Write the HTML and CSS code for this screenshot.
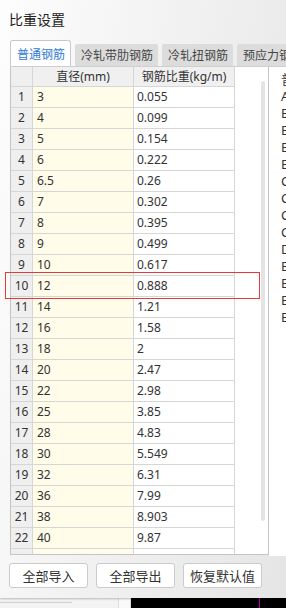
FILE: index.html
```html
<!DOCTYPE html>
<html lang="zh-CN">

<head>
    <meta charset="UTF-8">
    <meta name="viewport" content="width=device-width, initial-scale=1.0">
    <title>比重设置</title>
    <link rel="stylesheet" href="styles.css">
</head>

<body>
    <div class="dialog">
        <div class="title">比重设置</div>

        <div class="tabs">
            <div class="tab active">普通钢筋</div>
            <div class="tab">冷轧带肋钢筋</div>
            <div class="tab">冷轧扭钢筋</div>
            <div class="tab">预应力钢筋</div>
        </div>

        <div class="content">
            <div class="grid-panel">
                <table class="grid">
                    <thead>
                        <tr>
                            <th class="num"></th>
                            <th class="dia">直径(mm)</th>
                            <th class="wt">钢筋比重(kg/m)</th>
                        </tr>
                    </thead>
                    <tbody>
                        <tr><td class="num">1</td><td class="dia">3</td><td class="wt">0.055</td></tr>
                        <tr><td class="num">2</td><td class="dia">4</td><td class="wt">0.099</td></tr>
                        <tr><td class="num">3</td><td class="dia">5</td><td class="wt">0.154</td></tr>
                        <tr><td class="num">4</td><td class="dia">6</td><td class="wt">0.222</td></tr>
                        <tr><td class="num">5</td><td class="dia">6.5</td><td class="wt">0.26</td></tr>
                        <tr><td class="num">6</td><td class="dia">7</td><td class="wt">0.302</td></tr>
                        <tr><td class="num">7</td><td class="dia">8</td><td class="wt">0.395</td></tr>
                        <tr><td class="num">8</td><td class="dia">9</td><td class="wt">0.499</td></tr>
                        <tr><td class="num">9</td><td class="dia">10</td><td class="wt">0.617</td></tr>
                        <tr><td class="num">10</td><td class="dia">12</td><td class="wt">0.888</td></tr>
                        <tr><td class="num">11</td><td class="dia">14</td><td class="wt">1.21</td></tr>
                        <tr><td class="num">12</td><td class="dia">16</td><td class="wt">1.58</td></tr>
                        <tr><td class="num">13</td><td class="dia">18</td><td class="wt">2</td></tr>
                        <tr><td class="num">14</td><td class="dia">20</td><td class="wt">2.47</td></tr>
                        <tr><td class="num">15</td><td class="dia">22</td><td class="wt">2.98</td></tr>
                        <tr><td class="num">16</td><td class="dia">25</td><td class="wt">3.85</td></tr>
                        <tr><td class="num">17</td><td class="dia">28</td><td class="wt">4.83</td></tr>
                        <tr><td class="num">18</td><td class="dia">30</td><td class="wt">5.549</td></tr>
                        <tr><td class="num">19</td><td class="dia">32</td><td class="wt">6.31</td></tr>
                        <tr><td class="num">20</td><td class="dia">36</td><td class="wt">7.99</td></tr>
                        <tr><td class="num">21</td><td class="dia">38</td><td class="wt">8.903</td></tr>
                        <tr><td class="num">22</td><td class="dia">40</td><td class="wt">9.87</td></tr>
                        <tr><td class="num">23</td><td class="dia">50</td><td class="wt">15.42</td></tr>
                    </tbody>
                </table>
                <div class="scrollbar"></div>
            </div>

            <div class="side-panel">
                <p>普通钢筋</p>
                <p>A</p>
                <p>B</p>
                <p>B</p>
                <p>B</p>
                <p>B</p>
                <p>C</p>
                <p>C</p>
                <p>C</p>
                <p>C</p>
                <p>D</p>
                <p>B</p>
                <p>B</p>
                <p>B</p>
                <p>B</p>
            </div>
        </div>

        <div class="buttons">
            <button class="btn">全部导入</button>
            <button class="btn">全部导出</button>
            <button class="btn">恢复默认值</button>
        </div>

        <!-- 标注框 -->
        <div class="mark"></div>
    </div>

    <div class="desktop">
        <div class="desk-left">
            <div class="desk-line"></div>
        </div>
        <div class="desk-sep"></div>
        <div class="desk-dark">
            <div class="desk-pink"></div>
        </div>
    </div>
</body>

</html>
```

FILE: styles.css
```css
* {
    padding: 0;
    margin: 0;
    box-sizing: border-box;
}

body {
    width: 286px;
    height: 608px;
    overflow: hidden;
    font-family: "Noto Sans", "Noto Sans CJK SC", sans-serif;
    color: #333;
    background-color: #f2f2f2;
}

.dialog {
    position: relative;
    height: 598px;
    background: linear-gradient(100deg, #fdfdfd 0%, #f3f3f3 40%, #e5e5e5 100%);
    box-shadow: 0 1px 2px rgba(0, 0, 0, 0.25);
}

.title {
    height: 40px;
    padding: 9px 0 0 9px;
    font-family: "Noto Sans CJK SC", sans-serif;
    font-size: 14px;
    line-height: 20px;
    color: #222;
}

/* 选项卡 */
.tabs {
    display: flex;
    gap: 4px;
    height: 26px;
    padding-left: 10px;
    align-items: flex-end;
    white-space: nowrap;
    overflow: hidden;
}

.tab {
    height: 22px;
    padding: 0 5px 0 6px;
    font-family: "Noto Sans CJK SC", sans-serif;
    font-size: 12px;
    line-height: 22px;
    color: #444;
    background-color: #dcdcdc;
    border-radius: 2px 2px 0 0;
    flex-shrink: 0;
}

.tab.active {
    height: 26px;
    width: 61px;
    padding-top: 1px;
    line-height: 24px;
    color: #2f7ad6;
    background-color: #fff;
    border: 1px solid #c9c9c9;
    border-bottom: none;
    border-radius: 3px 3px 0 0;
}

.content {
    display: flex;
    height: 489px;
    border-top: 1px solid #cfcfcf;
    margin-left: 10px;
}

.grid-panel {
    position: relative;
    width: 259px;
    height: 488px;
    overflow: hidden;
    background-color: #fff;
    border-left: 1px solid #c4c4c4;
    border-right: 1px solid #c4c4c4;
    border-bottom: 1px solid #c4c4c4;
}

.grid {
    border-collapse: separate;
    border-spacing: 0;
    font-size: 12px;
}

.grid th,
.grid td {
    border-right: 1px solid #d6d6d6;
    border-bottom: 1px solid #d6d6d6;
    font-weight: normal;
    white-space: nowrap;
    padding: 0;
}

.grid th {
    height: 20px;
    line-height: 19px;
    background-color: #f0f0f0;
    font-family: "Noto Sans", "Noto Sans CJK SC", sans-serif;
    color: #333;
}

.grid td {
    height: 21px;
    line-height: 20px;
}

.grid .num {
    width: 22px;
    text-align: center;
    background-color: #efefef;
}

.grid .dia {
    width: 101px;
}

.grid .wt {
    width: 101px;
}

.grid td.dia {
    padding-left: 4px;
    background-color: #fffce9;
}

.grid td.wt {
    padding-left: 3px;
    background-color: #fff;
}

.grid th.dia,
.grid th.wt {
    text-align: center;
}

.scrollbar {
    position: absolute;
    left: 250px;
    top: 14px;
    width: 4px;
    height: 440px;
    border-radius: 2px;
    background-color: #e4e4e4;
}

.side-panel {
    flex: 1;
    height: 489px;
    padding: 4px 0 0 12px;
    overflow: hidden;
    background-color: #fff;
    font-family: "Noto Sans", "Noto Sans CJK SC", sans-serif;
    font-size: 13px;
    line-height: 17px;
    color: #333;
    white-space: nowrap;
}

/* 按钮 */
.buttons {
    display: flex;
    gap: 8px;
    padding: 8px 0 0 9px;
}

.btn {
    width: 79px;
    height: 25px;
    background-color: #fff;
    border: 1px solid #cbcbcb;
    border-radius: 3px;
    font-family: "Noto Sans CJK SC", sans-serif;
    font-size: 13px;
    color: #333;
}

.mark {
    position: absolute;
    left: 5px;
    top: 272px;
    width: 255px;
    height: 27px;
    border: 1px solid #e63a3a;
}

.desktop {
    display: flex;
    height: 10px;
}

.desk-left {
    width: 118px;
    background-color: #f3f3f3;
    padding-top: 4px;
}

.desk-line {
    width: 72px;
    height: 1px;
    background-color: #cfcfcf;
}

.desk-sep {
    width: 13px;
    background-color: #fafafa;
    border-left: 1px solid #ddd;
    border-right: 1px solid #ddd;
}

.desk-dark {
    flex: 1;
    background-color: #000;
    padding-left: 128px;
}

.desk-pink {
    width: 1px;
    height: 10px;
    background-color: #b000b0;
}
```
